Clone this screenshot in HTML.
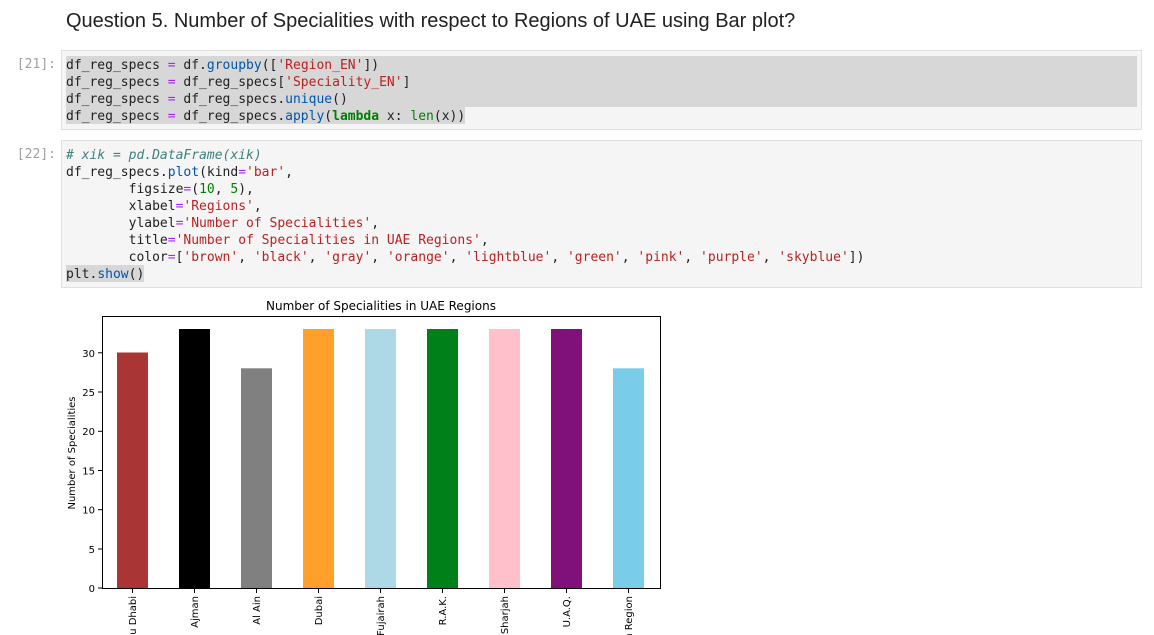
<!DOCTYPE html>
<html><head><meta charset="utf-8"><style>
body{margin:0;width:1154px;height:635px;background:#fff;overflow:hidden;position:relative;font-family:"DejaVu Sans Mono","Liberation Mono",monospace;}
.h{position:absolute;left:66px;top:10px;font:20px "Liberation Sans",sans-serif;color:#212121;white-space:nowrap}
.p{position:absolute;left:0;width:56px;text-align:right;font-size:13px;color:#a0a0a0;}
.cell{position:absolute;left:61px;width:1079px;background:#f5f5f5;border:1px solid #e0e0e0;}
.ln{position:absolute;left:4px;height:17px;line-height:19px;font-size:13px;white-space:pre;color:#212121}
.hl{background:#d7d7d7}
.o{color:#aa22ff}.f{color:#0055aa}.s{color:#ba2121}.k{color:#008000;font-weight:bold}.n{color:#008000}.c{color:#408080;font-style:italic}.b{color:#008000}
</style></head><body>
<div class="h">Question 5. Number of Specialities with respect to Regions of UAE using Bar plot?</div>
<div class="p" style="top:57px">[21]:</div>
<div class="cell" style="top:50px;height:78px">
<div class="hl" style="position:absolute;left:4px;top:5px;width:1071px;height:51px"></div>
<div class="ln" style="top:5px">df_reg_specs <span class="o">=</span> df.<span class="f">groupby</span>([<span class="s">'Region_EN'</span>])</div>
<div class="ln" style="top:22px">df_reg_specs <span class="o">=</span> df_reg_specs[<span class="s">'Speciality_EN'</span>]</div>
<div class="ln" style="top:39px">df_reg_specs <span class="o">=</span> df_reg_specs.<span class="f">unique</span>()</div>
<div class="ln hl" style="top:56px">df_reg_specs <span class="o">=</span> df_reg_specs.<span class="f">apply</span>(<span class="k">lambda</span> x: <span class="b">len</span>(x))</div>
</div>
<div class="p" style="top:147px">[22]:</div>
<div class="cell" style="top:140px;height:146px">
<div class="ln" style="top:5px"><span class="c"># xik = pd.DataFrame(xik)</span></div>
<div class="ln" style="top:22px">df_reg_specs.<span class="f">plot</span>(kind<span class="o">=</span><span class="s">'bar'</span>,</div>
<div class="ln" style="top:39px">        figsize<span class="o">=</span>(<span class="n">10</span>, <span class="n">5</span>),</div>
<div class="ln" style="top:56px">        xlabel<span class="o">=</span><span class="s">'Regions'</span>,</div>
<div class="ln" style="top:73px">        ylabel<span class="o">=</span><span class="s">'Number of Specialities'</span>,</div>
<div class="ln" style="top:90px">        title<span class="o">=</span><span class="s">'Number of Specialities in UAE Regions'</span>,</div>
<div class="ln" style="top:107px">        color<span class="o">=</span>[<span class="s">'brown'</span>, <span class="s">'black'</span>, <span class="s">'gray'</span>, <span class="s">'orange'</span>, <span class="s">'lightblue'</span>, <span class="s">'green'</span>, <span class="s">'pink'</span>, <span class="s">'purple'</span>, <span class="s">'skyblue'</span>])</div>
<div class="ln hl" style="top:124px">plt.<span class="f">show</span>()</div>
</div>
<svg style="position:absolute;left:0;top:0" width="1154" height="635" font-family="DejaVu Sans, sans-serif" font-size="10" fill="#000">
<text x="381" y="310" text-anchor="middle" font-size="12">Number of Specialities in UAE Regions</text>
<g>
<rect x="117" y="352.5" width="31" height="235.5" fill="#a52a2a" opacity="0.95"/>
<rect x="179" y="329" width="31" height="259" fill="#000"/>
<rect x="241" y="368.3" width="31" height="219.7" fill="#808080"/>
<rect x="303" y="329" width="31" height="259" fill="#ffa02a"/>
<rect x="365" y="329" width="31" height="259" fill="#add8e6"/>
<rect x="427" y="329" width="31" height="259" fill="#008018"/>
<rect x="489" y="329" width="31" height="259" fill="#ffc0cb"/>
<rect x="551" y="329" width="31" height="259" fill="#80107a"/>
<rect x="613" y="368.3" width="31" height="219.7" fill="#7acde8"/>
</g>
<rect x="102.5" y="316.5" width="558" height="272" fill="none" stroke="#000" stroke-width="1"/>
<g stroke="#000">
<line x1="98" x2="102" y1="588" y2="588"/><line x1="98" x2="102" y1="549" y2="549"/><line x1="98" x2="102" y1="509.7" y2="509.7"/><line x1="98" x2="102" y1="470.5" y2="470.5"/><line x1="98" x2="102" y1="431.3" y2="431.3"/><line x1="98" x2="102" y1="392" y2="392"/><line x1="98" x2="102" y1="352.8" y2="352.8"/>
<line x1="132.5" x2="132.5" y1="589" y2="593"/><line x1="194.5" x2="194.5" y1="589" y2="593"/><line x1="256.5" x2="256.5" y1="589" y2="593"/><line x1="318.5" x2="318.5" y1="589" y2="593"/><line x1="380.5" x2="380.5" y1="589" y2="593"/><line x1="442.5" x2="442.5" y1="589" y2="593"/><line x1="504.5" x2="504.5" y1="589" y2="593"/><line x1="566.5" x2="566.5" y1="589" y2="593"/><line x1="628.5" x2="628.5" y1="589" y2="593"/>
</g>
<g text-anchor="end">
<text x="95" y="592">0</text><text x="95" y="553">5</text><text x="95" y="513.5">10</text><text x="95" y="474.5">15</text><text x="95" y="435">20</text><text x="95" y="396">25</text><text x="95" y="357">30</text>
</g>
<text transform="translate(75,453) rotate(-90)" text-anchor="middle">Number of Specialities</text>
<g text-anchor="end">
<text transform="translate(136,596) rotate(-90)">Abu Dhabi</text>
<text transform="translate(198,596) rotate(-90)">Ajman</text>
<text transform="translate(260,596) rotate(-90)">Al Ain</text>
<text transform="translate(322,596) rotate(-90)">Dubai</text>
<text transform="translate(384,596) rotate(-90)">Fujairah</text>
<text transform="translate(446,596) rotate(-90)">R.A.K.</text>
<text transform="translate(508,596) rotate(-90)">Sharjah</text>
<text transform="translate(570,596) rotate(-90)">U.A.Q.</text>
<text transform="translate(632,596) rotate(-90)">Western Region</text>
</g>
</svg>
</body></html>
